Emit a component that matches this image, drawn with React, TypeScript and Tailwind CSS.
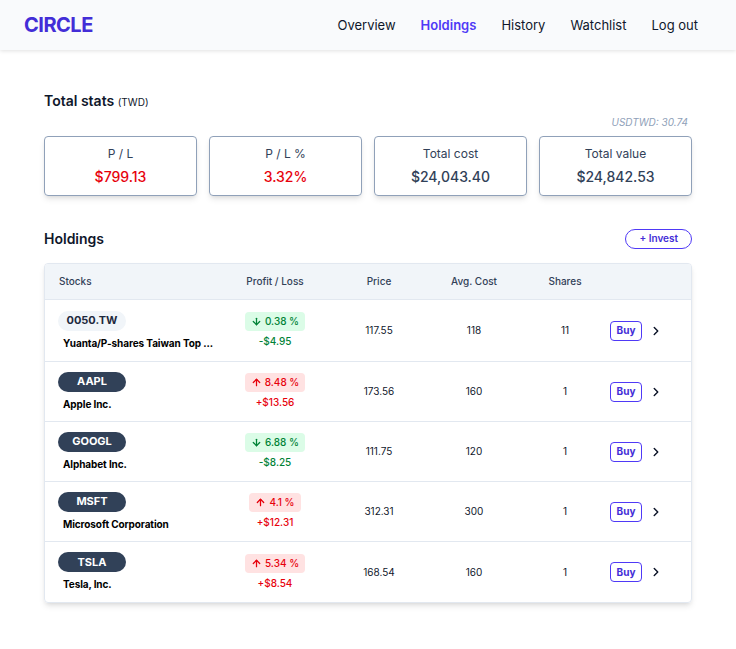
import { ChevronRight, ArrowDown, ArrowUp } from "lucide-react";

interface Holding {
  symbol: string;
  name: string;
  pct: string;
  amount: string;
  up: boolean;
  price: string;
  cost: string;
  shares: string;
  light?: boolean;
}

const holdings: Holding[] = [
  { symbol: "0050.TW", name: "Yuanta/P-shares Taiwan Top ...", pct: "0.38 %", amount: "-$4.95", up: false, price: "117.55", cost: "118", shares: "11", light: true },
  { symbol: "AAPL", name: "Apple Inc.", pct: "8.48 %", amount: "+$13.56", up: true, price: "173.56", cost: "160", shares: "1" },
  { symbol: "GOOGL", name: "Alphabet Inc.", pct: "6.88 %", amount: "-$8.25", up: false, price: "111.75", cost: "120", shares: "1" },
  { symbol: "MSFT", name: "Microsoft Corporation", pct: "4.1 %", amount: "+$12.31", up: true, price: "312.31", cost: "300", shares: "1" },
  { symbol: "TSLA", name: "Tesla, Inc.", pct: "5.34 %", amount: "+$8.54", up: true, price: "168.54", cost: "160", shares: "1" },
];

const stats = [
  { label: "P / L", value: "$799.13", red: true },
  { label: "P / L %", value: "3.32%", red: true },
  { label: "Total cost", value: "$24,043.40" },
  { label: "Total value", value: "$24,842.53" },
];

const cols = "grid grid-cols-[173px_114px_94px_96px_86px_1fr] items-center";

export default function App() {
  return (
    <div className="min-h-screen bg-white font-['Inter',sans-serif] text-slate-900">
      {/* Nav */}
      <header className="h-[50px] bg-[#f9fafc] shadow-[0_1px_4px_rgba(0,0,0,0.12)] flex items-center justify-between pl-6 pr-[38px]">
        <div className="text-[20px] font-bold text-indigo-700 tracking-tight">CIRCLE</div>
        <nav className="flex items-center gap-[25px] text-[13px] text-slate-900 pt-[2px]">
          <a>Overview</a>
          <a className="font-semibold text-indigo-600">Holdings</a>
          <a>History</a>
          <a>Watchlist</a>
          <a>Log out</a>
        </nav>
      </header>

      <main className="w-[648px] mx-auto pt-[40px]">
        {/* Total stats */}
        <h2 className="text-[14px] font-semibold">
          Total stats <span className="text-[10px] font-normal">(TWD)</span>
        </h2>
        <div className="text-right text-[10px] italic text-slate-400 mt-[4px] pr-1">USDTWD: 30.74</div>
        <div className="grid grid-cols-4 gap-3 mt-[6px]">
          {stats.map((s) => (
            <div
              key={s.label}
              className="h-[60px] rounded border border-slate-400 shadow-md flex flex-col items-center justify-center gap-[3px]"
            >
              <div className="text-[12px] text-slate-700">{s.label}</div>
              <div className={`text-[14px] font-medium ${s.red ? "text-red-600" : "text-slate-700"}`}>{s.value}</div>
            </div>
          ))}
        </div>

        {/* Holdings */}
        <div className="flex items-center justify-between mt-[32px]">
          <h2 className="text-[14px] font-semibold">Holdings</h2>
          <button className="h-5 px-[13px] rounded-full border border-indigo-600 text-[10px] font-semibold text-indigo-700">
            + Invest
          </button>
        </div>

        <div className="mt-[14px] rounded border border-slate-200 shadow-md overflow-hidden">
          <div className={`${cols} h-9 bg-slate-100 border-b border-slate-200 text-[10px] font-medium text-slate-700`}>
            <div className="pl-[14px]">Stocks</div>
            <div className="text-center">Profit / Loss</div>
            <div className="text-center">Price</div>
            <div className="text-center">Avg. Cost</div>
            <div className="text-center">Shares</div>
            <div />
          </div>
          {holdings.map((h, i) => (
            <div
              key={h.symbol}
              className={`${cols} ${i === 0 ? "h-[62px]" : "h-[60px]"} ${i < holdings.length - 1 ? "border-b border-slate-200" : ""}`}
            >
              <div className="pl-[13px] flex flex-col items-start gap-[5px]">
                <span
                  className={`w-[68px] h-[20px] rounded-full flex items-center justify-center text-[11px] font-bold ${
                    h.light ? "bg-slate-100 text-slate-800" : "bg-slate-700 text-white"
                  }`}
                >
                  {h.symbol}
                </span>
                <span className="text-[10px] font-bold text-black pl-[5px] tracking-[-0.1px]">{h.name}</span>
              </div>
              <div className="flex flex-col items-center gap-[3px]">
                <span
                  className={`h-[19px] px-[6px] rounded flex items-center gap-[3px] text-[10px] font-medium ${
                    h.up ? "bg-red-100 text-red-600" : "bg-green-100 text-green-700"
                  }`}
                >
                  {h.up ? <ArrowUp size={11} strokeWidth={2.75} /> : <ArrowDown size={11} strokeWidth={2.75} />}
                  {h.pct}
                </span>
                <span className={`text-[10px] font-medium ${h.up ? "text-red-600" : "text-green-700"}`}>{h.amount}</span>
              </div>
              <div className="text-center text-[10px]">{h.price}</div>
              <div className="text-center text-[10px]">{h.cost}</div>
              <div className="text-center text-[10px]">{h.shares}</div>
              <div className="flex items-center gap-[7px] pl-[2px]">
                <button className="w-8 h-5 rounded border border-indigo-600 text-[10px] font-bold text-indigo-700">
                  Buy
                </button>
                <ChevronRight size={14} strokeWidth={2.5} className="text-slate-900" />
              </div>
            </div>
          ))}
        </div>
      </main>
    </div>
  );
}
